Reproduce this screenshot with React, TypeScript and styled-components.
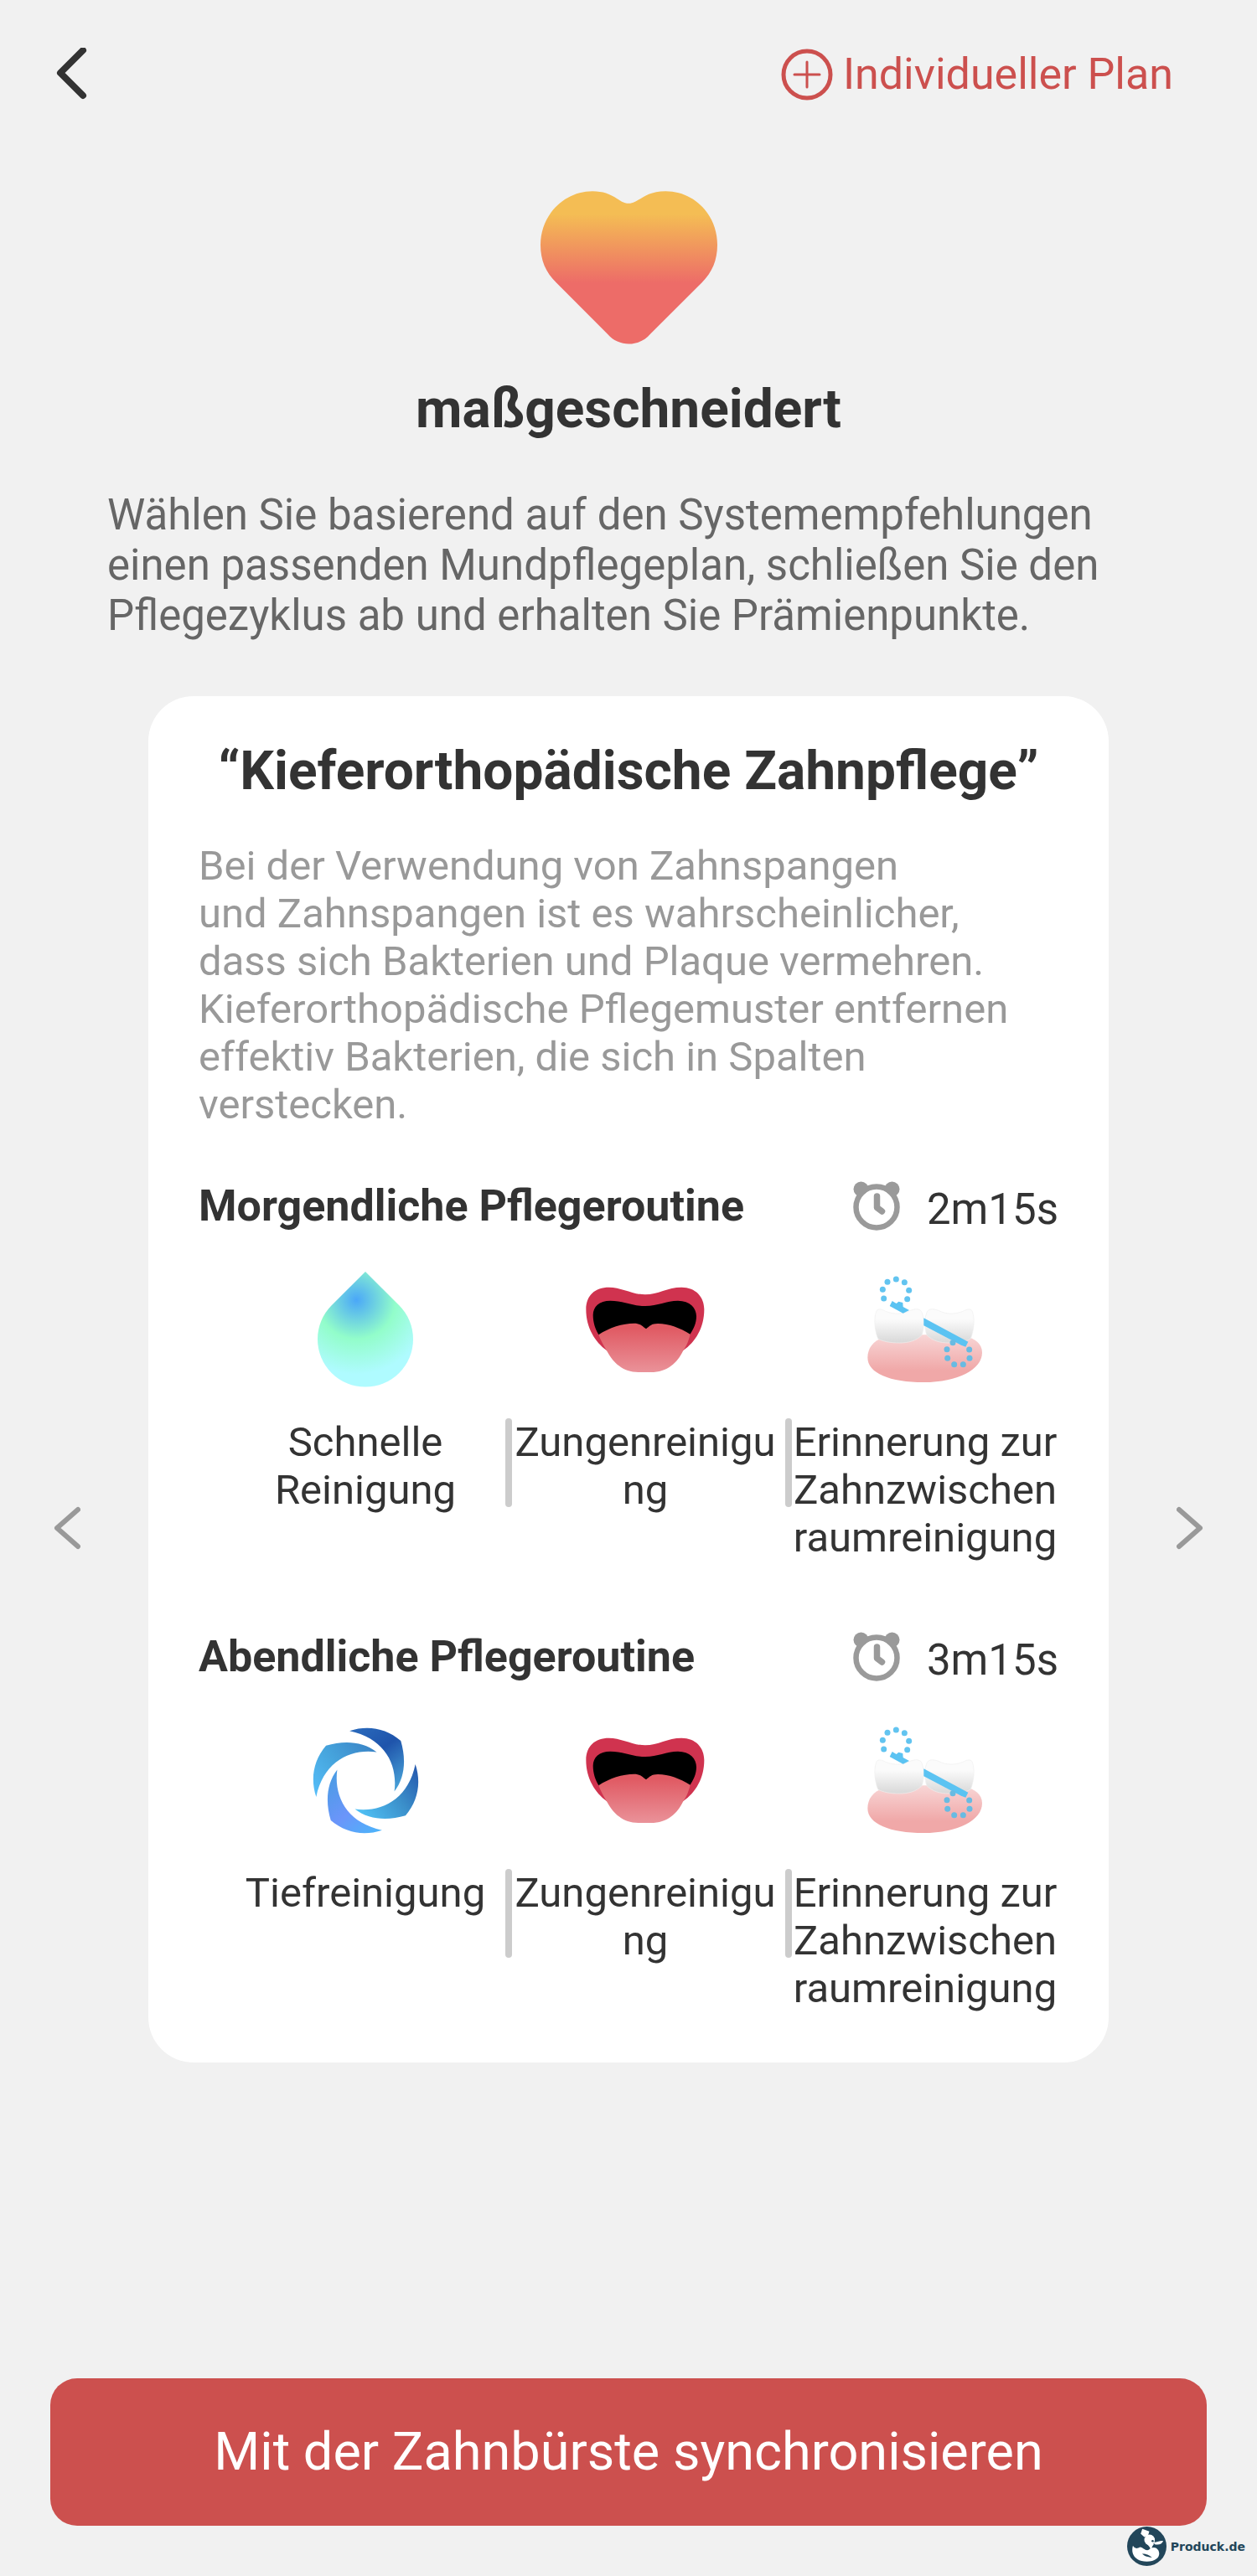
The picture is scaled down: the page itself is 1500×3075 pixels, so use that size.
import React from "react";
import styled, { createGlobalStyle } from "styled-components";

const GlobalStyle = createGlobalStyle`
  *, *::before, *::after { box-sizing: border-box; }
  body {
    margin: 0;
    background: #f1f1f1;
    font-family: Roboto, "Noto Sans", sans-serif;
    color: #333333;
  }
  h1, h2, h3, p, ul { margin: 0; padding: 0; }
  button {
    border: 0;
    padding: 0;
    background: none;
    font: inherit;
    color: inherit;
    cursor: pointer;
  }
  svg { display: block; flex: none; }
`;

const Page = styled.div`
  min-height: 100vh;
  display: flex;
  flex-direction: column;
`;

const Header = styled.header`
  display: flex;
  align-items: center;
  justify-content: space-between;
  padding: 57px 100px 0 60px;
`;

const BackButton = styled.button`
  padding: 0 6px;
`;

const PlanButton = styled.button`
  display: flex;
  align-items: center;
  gap: 12px;
  font-size: 52px;
  line-height: 60px;
  color: #cc504e;
`;

const Hero = styled.section`
  display: flex;
  flex-direction: column;
  align-items: center;
  padding: 107px 128px 66px;
`;

const HeroTitle = styled.h1`
  margin-top: 40px;
  font-size: 64px;
  line-height: 76px;
  font-weight: 700;
`;

const HeroText = styled.p`
  align-self: stretch;
  margin-top: 58px;
  font-size: 51px;
  line-height: 60px;
  color: #666666;
`;

const Carousel = styled.main`
  flex: 1;
  display: flex;
  align-items: center;
  justify-content: space-between;
  padding: 0 60px;
`;

const ArrowButton = styled.button`
  padding: 0 4px;
`;

const Card = styled.article`
  align-self: flex-start;
  flex: 1;
  margin: 0 77px;
  padding: 52px 60px 60px;
  border-radius: 54px;
  background: #ffffff;
`;

const CardTitle = styled.h2`
  font-size: 64px;
  line-height: 76px;
  font-weight: 700;
  text-align: center;
  white-space: nowrap;
`;

const CardText = styled.p`
  margin: 46px 0 63px;
  padding-right: 40px;
  font-size: 49px;
  line-height: 57px;
  color: #999999;
`;

const Routine = styled.section`
  & + & { margin-top: 84px; }
`;

const RoutineHead = styled.div`
  display: flex;
  align-items: flex-start;
`;

const RoutineTitle = styled.h3`
  flex: 1;
  font-size: 52px;
  line-height: 60px;
  font-weight: 700;
`;

const Duration = styled.span`
  margin-left: 32px;
  font-size: 51px;
  line-height: 68px;
`;

const Steps = styled.ul`
  display: grid;
  grid-template-columns: repeat(3, 1fr);
  margin: 40px -8px 0 32px;
  list-style: none;
`;

const Step = styled.li`
  display: flex;
  flex-direction: column;
  align-items: center;
  min-width: 0;
`;

const StepIcon = styled.div`
  display: flex;
  align-items: center;
  height: 138px;
`;

const StepLabel = styled.span<{ $divided: boolean }>`
  position: relative;
  width: 100%;
  margin-top: 37px;
  padding: 0 6px;
  font-size: 49px;
  line-height: 57px;
  text-align: center;
  overflow-wrap: anywhere;

  &::before {
    content: "";
    display: ${(p) => (p.$divided ? "block" : "none")};
    position: absolute;
    left: 0;
    top: 0;
    width: 8px;
    height: 106px;
    border-radius: 4px;
    background: #cccccc;
  }
`;

const Footer = styled.footer`
  padding: 22px 60px 0;
`;

const SyncButton = styled.button`
  width: 100%;
  height: 176px;
  border-radius: 32px;
  background: #cc504e;
  color: #ffffff;
  font-size: 63px;
  line-height: 76px;
`;

const Credit = styled.div`
  display: flex;
  align-items: center;
  justify-content: flex-end;
  gap: 5px;
  height: 60px;
  padding: 1px 14px 12px 0;
  font-family: "DejaVu Sans", Verdana, sans-serif;
  font-size: 14px;
  font-weight: 700;
  color: #22465a;
`;

const BackIcon = () => (
  <svg width="38" height="64" viewBox="0 0 38 64" fill="none" stroke="#333" strokeWidth="8" strokeLinecap="round" strokeLinejoin="round">
    <path d="M33 3 L6 30 L33 57" />
  </svg>
);

const PlusCircleIcon = () => (
  <svg width="62" height="62" viewBox="0 0 62 62" fill="none" stroke="#cc504e" strokeLinecap="round">
    <circle cx="31" cy="31" r="28" strokeWidth="5" />
    <path d="M31 16 V46 M16 31 H46" strokeWidth="3" />
  </svg>
);

const ArrowIcon = ({ right = false }: { right?: boolean }) => (
  <svg width="32" height="52" viewBox="0 0 32 52" fill="none" stroke="#999" strokeWidth="6" strokeLinecap="round" strokeLinejoin="round">
    <path d={right ? "M3 4 L28 26 L3 48" : "M29 4 L4 26 L29 48"} />
  </svg>
);

const HeartIcon = () => (
  <svg width="211" height="183" viewBox="72 53 633 548">
    <defs>
      <linearGradient id="heart" gradientUnits="userSpaceOnUse" x1="0" y1="53" x2="0" y2="601">
        <stop offset="0.15" stopColor="#f4bd54" />
        <stop offset="0.6" stopColor="#ed6c68" />
      </linearGradient>
    </defs>
    <path
      fill="url(#heart)"
      d="M388 97 C425 97 440 53 520 53 C625 53 705 140 705 245 C705 300 686 344 650 380 L465 565 C425 612 352 612 312 565 L128 380 C91 344 72 300 72 245 C72 140 155 53 258 53 C336 53 352 97 388 97Z"
    />
  </svg>
);

const ClockIcon = () => (
  <svg width="56" height="60" viewBox="0 0 56 60">
    <circle cx="9.5" cy="9.5" r="9" fill="#9a9a9a" />
    <circle cx="46.5" cy="9.5" r="9" fill="#9a9a9a" />
    <circle cx="28" cy="31" r="24.5" fill="#fff" stroke="#9a9a9a" strokeWidth="6.5" />
    <path d="M8 14 L16 7 M48 14 L40 7" stroke="#9a9a9a" strokeWidth="9" />
    <path d="M28.5 18 V31.5 L34.5 36" fill="none" stroke="#9a9a9a" strokeWidth="7.5" strokeLinecap="round" strokeLinejoin="round" />
  </svg>
);

const DropIcon = () => (
  <svg width="114" height="138" viewBox="0 0 342 414">
    <defs>
      <radialGradient id="drop" gradientUnits="userSpaceOnUse" cx="139" cy="101" r="280">
        <stop offset="0" stopColor="#4aa7f8" />
        <stop offset="0.5" stopColor="#92fdca" />
        <stop offset="0.95" stopColor="#affbff" />
      </radialGradient>
    </defs>
    <path fill="url(#drop)" d="M171 0 L50 121 A171 171 0 1 0 292 121Z" />
  </svg>
);

const MouthIcon = () => (
  <svg width="142" height="102" viewBox="118 134 424 306">
    <defs>
      <linearGradient id="tongue" x1="0" y1="0" x2="0" y2="1">
        <stop offset="0.1" stopColor="#e05a63" />
        <stop offset="1" stopColor="#ea9299" />
      </linearGradient>
    </defs>
    <path
      fill="#d0334f"
      d="M118 215 C118 165 150 136 200 136 C245 136 285 162 330 162 C375 162 410 136 460 136 C510 136 541 170 541 215 C541 280 510 332 466 362 L192 362 C150 332 118 280 118 215Z"
    />
    <path
      fill="#000"
      d="M143 235 C143 205 165 184 205 184 C250 184 285 203 330 203 C375 203 405 184 447 184 C490 184 513 210 513 240 C513 265 503 287 488 308 L165 308 C150 285 143 260 143 235Z"
    />
    <path
      fill="url(#tongue)"
      d="M163 306 C200 280 250 265 290 265 C312 265 320 275 333 285 C346 275 352 266 375 266 C415 266 455 282 491 304 C483 335 475 350 465 364 C445 405 410 440 350 440 L305 440 C250 440 215 405 195 368 C180 345 170 325 163 306Z"
    />
  </svg>
);

const TOOTH =
  "M187 522 C195 512 208 518 222 525 C250 535 280 535 305 522 C330 512 345 515 350 530 C360 560 355 590 350 608 C330 630 300 637 270 637 C235 637 210 632 192 622 C180 590 176 550 187 522Z";

const UPPER_BRISTLES = [[257, 409], [287, 420], [303, 449], [297, 480], [213, 478], [209, 446], [226, 419]];
const LOWER_BRISTLES = [[460, 636], [439, 660], [441, 692], [465, 714], [497, 714], [520, 692], [519, 661]];

const InterdentalIcon = () => (
  <svg width="138" height="128" viewBox="155 397 412 384">
    <defs>
      <linearGradient id="gum" x1="0" y1="0" x2="0" y2="1">
        <stop offset="0" stopColor="#f8d6d6" />
        <stop offset="0.75" stopColor="#f0a8a8" />
      </linearGradient>
      <linearGradient id="tooth" x1="0" y1="0" x2="0" y2="1">
        <stop offset="0.3" stopColor="#fbfbfb" />
        <stop offset="1" stopColor="#d8d8d8" />
      </linearGradient>
    </defs>
    <path
      fill="url(#gum)"
      d="M155 690 C155 655 175 630 210 618 C280 606 430 606 500 612 C540 620 565 640 565 672 C565 730 480 778 355 778 C235 778 155 745 155 690Z"
    />
    <path d={TOOTH} fill="url(#tooth)" stroke="#eeeeee" strokeWidth="2" />
    <path d={TOOTH} transform="translate(716 0) scale(-1 1)" fill="url(#tooth)" stroke="#eeeeee" strokeWidth="2" />
    <path d="M243 487 L258 496 L266 489 L281 493 L282 508 L304 520 L282 531 L234 505Z" fill="#5bc3f2" />
    <path d="M356 548 L515 633 L506 651 L490 645 L356 575Z" fill="#5bc3f2" />
    <g fill="#62c4f0">
      {UPPER_BRISTLES.map(([x, y]) => (
        <circle key={`${x}-${y}`} cx={x} cy={y} r="10.5" />
      ))}
    </g>
    <g fill="#68bbe2">
      {LOWER_BRISTLES.map(([x, y]) => (
        <circle key={`${x}-${y}`} cx={x} cy={y} r="10.5" />
      ))}
    </g>
  </svg>
);

const BLADES = [
  { turn: 0, from: "#2a6abc", mid: "#1f54ab", to: "#48a2d8" },
  { turn: 90, from: "#2559ae", mid: "#3b8fca", to: "#50c2f6" },
  { turn: 180, from: "#4cb4fa", mid: "#6b95fa", to: "#4a9ce4" },
  { turn: 270, from: "#55bdf8", mid: "#47a6de", to: "#3a84c6" },
];

const SwirlIcon = () => (
  <svg width="127" height="127" viewBox="92 366 380 380">
    <defs>
      {BLADES.map((b) => (
        <linearGradient key={b.turn} id={`blade${b.turn}`} gradientUnits="userSpaceOnUse" x1="224" y1="379" x2="385" y2="594">
          <stop offset="0" stopColor={b.from} />
          <stop offset="0.45" stopColor={b.mid} />
          <stop offset="1" stopColor={b.to} />
        </linearGradient>
      ))}
    </defs>
    {BLADES.map((b) => (
      <path
        key={b.turn}
        fill={`url(#blade${b.turn})`}
        transform={`rotate(${b.turn} 282 556)`}
        d="M224 379 C290 357 355 370 407 414 C426 478 423 545 384 595 C397 500 350 405 224 379Z"
      />
    ))}
  </svg>
);

const DuckLogo = () => (
  <svg width="47" height="47" viewBox="74 78 142 142">
    <circle cx="145" cy="149" r="71" fill="#22465a" />
    <g fill="#fff">
      <path d="M123 104 L129 86 L154 95 L149 112 L136 116Z" />
      <circle cx="155" cy="126" r="19" />
      <path d="M168 133 C180 138 190 128 204 130 C200 140 190 145 174 142Z" />
      <path d="M142 136 L172 140 C166 147 163 151 163 158 L158 158 C156 150 150 146 142 136Z" />
      <path d="M95 147 C86 178 104 204 145 204 C182 204 196 184 187 164 C178 148 160 152 152 162 C140 168 132 152 120 152 C108 160 100 156 95 147Z" />
    </g>
    <path d="M128 176 C142 176 154 180 164 190 C150 187 138 186 128 176Z" fill="#22465a" />
    <circle cx="166" cy="130" r="4" fill="#22465a" />
  </svg>
);

const ROUTINES = [
  {
    title: "Morgendliche Pflegeroutine",
    duration: "2m15s",
    steps: [
      { label: "Schnelle Reinigung", Icon: DropIcon },
      { label: "Zungenreinigung", Icon: MouthIcon },
      { label: "Erinnerung zur Zahnzwischenraumreinigung", Icon: InterdentalIcon },
    ],
  },
  {
    title: "Abendliche Pflegeroutine",
    duration: "3m15s",
    steps: [
      { label: "Tiefreinigung", Icon: SwirlIcon },
      { label: "Zungenreinigung", Icon: MouthIcon },
      { label: "Erinnerung zur Zahnzwischenraumreinigung", Icon: InterdentalIcon },
    ],
  },
];

export default function App() {
  return (
    <Page>
      <GlobalStyle />
      <Header>
        <BackButton type="button" aria-label="Zurück">
          <BackIcon />
        </BackButton>
        <PlanButton type="button">
          <PlusCircleIcon />
          Individueller Plan
        </PlanButton>
      </Header>

      <Hero>
        <HeartIcon />
        <HeroTitle>maßgeschneidert</HeroTitle>
        <HeroText>
          Wählen Sie basierend auf den Systemempfehlungen einen passenden Mundpflegeplan, schließen Sie den
          Pflegezyklus ab und erhalten Sie Prämienpunkte.
        </HeroText>
      </Hero>

      <Carousel>
        <ArrowButton type="button" aria-label="Vorheriger Plan">
          <ArrowIcon />
        </ArrowButton>
        <Card>
          <CardTitle>“Kieferorthopädische Zahnpflege”</CardTitle>
          <CardText>
            Bei der Verwendung von Zahnspangen
            <br />
            und Zahnspangen ist es wahrscheinlicher, dass sich Bakterien und Plaque vermehren. Kieferorthopädische
            Pflegemuster entfernen effektiv Bakterien, die sich in Spalten verstecken.
          </CardText>
          {ROUTINES.map((routine) => (
            <Routine key={routine.title}>
              <RoutineHead>
                <RoutineTitle>{routine.title}</RoutineTitle>
                <ClockIcon />
                <Duration>{routine.duration}</Duration>
              </RoutineHead>
              <Steps>
                {routine.steps.map(({ label, Icon }, index) => (
                  <Step key={label}>
                    <StepIcon>
                      <Icon />
                    </StepIcon>
                    <StepLabel $divided={index > 0}>{label}</StepLabel>
                  </Step>
                ))}
              </Steps>
            </Routine>
          ))}
        </Card>
        <ArrowButton type="button" aria-label="Nächster Plan">
          <ArrowIcon right />
        </ArrowButton>
      </Carousel>

      <Footer>
        <SyncButton type="button">Mit der Zahnbürste synchronisieren</SyncButton>
      </Footer>
      <Credit>
        <DuckLogo />
        Produck.de
      </Credit>
    </Page>
  );
}
